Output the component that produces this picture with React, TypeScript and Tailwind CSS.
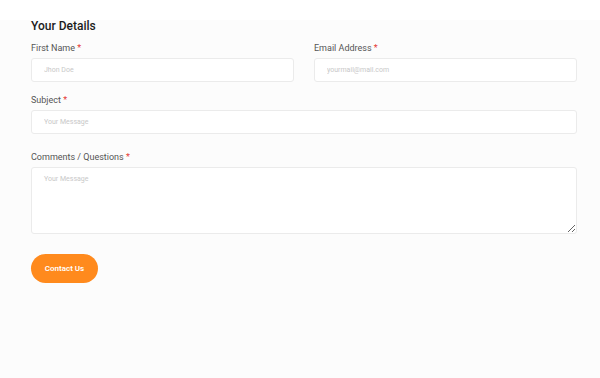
const Label = ({ text }: { text: string }) => (
  <label className="block text-[9px] leading-[12px] text-[#555] mb-[4px]">
    {text} <span className="text-[#e53935]">*</span>
  </label>
);

const inputCls =
  "block w-full h-[24px] bg-white border border-[#ebebeb] rounded-[3px] px-[12px] text-[7px] text-[#444] placeholder:text-[#c8c8c8] outline-none";

export default function App() {
  return (
    <div
      className="min-h-[378px] bg-white pt-[20px]"
      style={{ fontFamily: "Roboto, 'Noto Sans', sans-serif" }}
    >
      <div className="min-h-[358px] bg-[#fcfcfc] px-[31px]">
        <div className="w-[546px]">
          <h2 className="text-[12px] leading-[12px] font-medium text-[#1b1b1b] mb-[10px]">
            Your Details
          </h2>
          <div className="grid grid-cols-2 gap-x-[20px]">
            <div>
              <Label text="First Name" />
              <input className={inputCls} placeholder="Jhon Doe" />
            </div>
            <div>
              <Label text="Email Address" />
              <input className={inputCls} placeholder="yourmail@mail.com" />
            </div>
          </div>
          <div className="mt-[12px]">
            <Label text="Subject" />
            <input className={inputCls} placeholder="Your Message" />
          </div>
          <div className="mt-[17px]">
            <Label text="Comments / Questions" />
            <textarea
              className="block w-full h-[67px] bg-white border border-[#ebebeb] rounded-[3px] px-[12px] py-[6px] text-[7px] text-[#444] placeholder:text-[#c8c8c8] outline-none"
              placeholder="Your Message"
            />
          </div>
          <button
            type="button"
            className="block mt-[20px] w-[67px] h-[29px] rounded-full bg-[#ff8a1d] text-white text-[8px] font-semibold"
          >
            Contact Us
          </button>
        </div>
      </div>
    </div>
  );
}
